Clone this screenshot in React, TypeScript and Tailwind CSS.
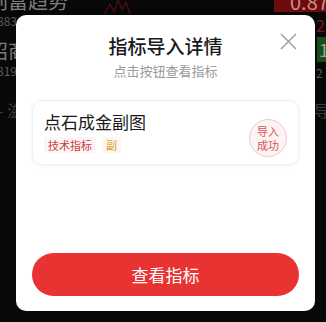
import React from "react";

function BgRow({
  name,
  code,
  right,
  h,
}: {
  name: string;
  code?: string;
  right: React.ReactNode;
  h: string;
}) {
  return (
    <div className={`flex justify-between ${h}`}>
      <div className="flex flex-col ml-[-12px]">
        <span className="text-[20px] leading-[24px] text-[#7d7d7d] whitespace-nowrap">{name}</span>
        {code && <span className="mt-[1px] ml-[9px] text-[12px] leading-[14px] text-[#5a5a5a]">{code}</span>}
      </div>
      {right}
    </div>
  );
}

export default function App() {
  return (
    <div
      className="relative w-[326px] h-[322px] overflow-hidden bg-[#080808]"
      style={{ fontFamily: '"Noto Sans CJK SC", "Noto Sans", sans-serif' }}
    >
      {/* dimmed background list */}
      <div className="flex flex-col mt-[-11px]">
        <BgRow
          h="h-[50px]"
          name="创富趋势"
          code="883"
          right={
            <div className="flex flex-col items-end">
              <div className="mt-[3px] w-[52px] h-[20px] bg-[#6e0b0b] text-[20px] leading-[20px] text-[#c89090] pl-[16px] whitespace-nowrap">
                0.87
              </div>
              <span className="mt-[4px] w-[10px] text-[16px] leading-[18px] text-[#7a1818] whitespace-nowrap">2.</span>
            </div>
          }
        />
        <BgRow
          h="h-[61px]"
          name="招商"
          code="819"
          right={
            <div className="flex flex-col items-end">
              <div className="mt-[-2px] w-[9px] h-[25px] bg-[#1b4d1b] text-[18px] leading-[25px] text-[#8ab08a] pl-[2px] overflow-hidden">
                1
              </div>
              <span className="mt-[4px] w-[10px] text-[12px] leading-[14px] text-[#5a5a5a]">2</span>
            </div>
          }
        />
        <div className="flex justify-between">
          <span className="ml-[-2px] text-[16px] leading-[20px] text-[#3a3a3a] whitespace-nowrap">- 滋</span>
          <span className="w-[12px] text-[16px] leading-[20px] text-[#3a3a3a] overflow-hidden">导</span>
        </div>
      </div>
      <svg className="absolute left-[104px] top-0" width="30" height="16" viewBox="0 0 30 16">
        <path d="M0 15 L6 4 L10 12 L14 0 L18 9 L22 2 L26 14" stroke="#4a0c0c" strokeWidth="1.5" fill="none" />
      </svg>

      {/* modal */}
      <div className="absolute left-[16px] top-[15px] w-[299px] h-[296px] bg-white rounded-[10px] flex flex-col">
        <button className="absolute top-[18px] right-[18px] w-[17px] h-[17px]">
          <svg width="17" height="17" viewBox="0 0 17 17">
            <path d="M1 1 L16 16 M16 1 L1 16" stroke="#9a9a9a" strokeWidth="1.4" />
          </svg>
        </button>
        <div className="pt-[18px] text-center text-[19px] leading-[26px] font-medium text-[#1a1a1a]">
          指标导入详情
        </div>
        <div className="mt-[3px] text-center text-[13px] leading-[18px] text-[#9a9a9a]">
          点击按钮查看指标
        </div>
        <div className="mx-[16px] mt-[20px] h-[65px] rounded-[10px] border border-[#f0f0f0] shadow-[0_1px_4px_rgba(0,0,0,0.06)] pl-[11px] pr-[11px] pt-[9px] flex justify-between">
          <div className="flex flex-col">
            <div className="text-[17px] leading-[24px] text-[#1a1a1a]">点石成金副图</div>
            <div className="mt-[3px] flex items-center gap-[6px]">
              <span className="px-[4px] text-[11px] leading-[16px] text-[#c93a40] bg-[#fdf5f5] rounded-[2px]">技术指标</span>
              <span className="px-[4px] text-[11px] leading-[16px] text-[#e0a040] bg-[#fdf8ef] rounded-[2px]">副</span>
            </div>
          </div>
          <div className="mt-[9px] w-[38px] h-[38px] rounded-full border border-[#f0cccc] bg-[#fdf3f3] flex flex-col items-center justify-center text-[11px] leading-[14px] text-[#d4545c]">
            <span>导入</span>
            <span>成功</span>
          </div>
        </div>
        <button className="mt-auto mb-[15px] mx-[16px] h-[43px] rounded-full bg-[#e93232] text-white text-[17px] leading-[43px]">
          查看指标
        </button>
      </div>
    </div>
  );
}
